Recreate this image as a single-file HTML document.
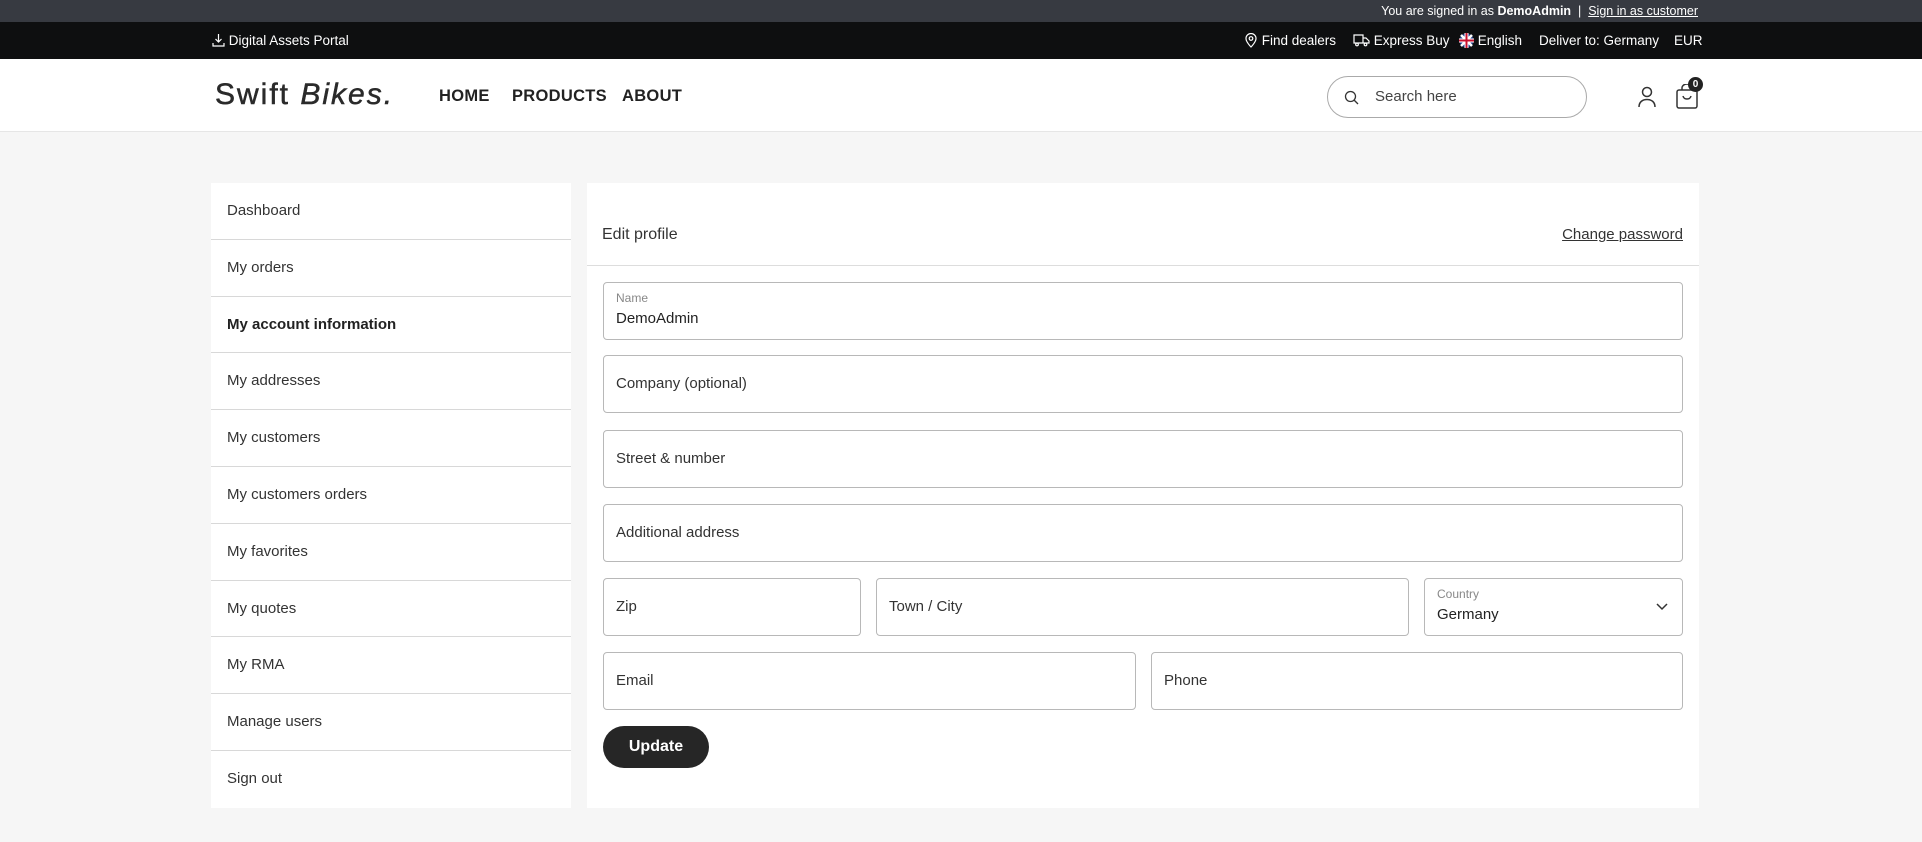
<!DOCTYPE html>
<html><head><meta charset="utf-8"><style>
*{box-sizing:border-box;margin:0;padding:0}
body{width:1922px;height:842px;background:#f6f6f6;font-family:"Liberation Sans",sans-serif;color:#222;position:relative;overflow:hidden}
.a{position:absolute}
.top{left:0;top:0;width:1922px;height:22px;background:#373a41;color:#fff;font-size:12.5px}
.blk{left:0;top:22px;width:1922px;height:37px;background:#0e0f10;color:#fff;font-size:13.5px}
.hdr{left:0;top:59px;width:1922px;height:73px;background:#fff;border-bottom:1px solid #e6e6e6}
.side{left:211px;top:183px;width:360px;height:625px;background:#fff}
.side div{height:56.8px;border-bottom:1px solid #d8d8d8;padding-left:16px;line-height:56px;font-size:15px;color:#333}
.side div:last-child{border-bottom:none}
.main{left:587px;top:183px;width:1112px;height:625px;background:#fff}
.in{position:absolute;border:1px solid #b8b8b8;border-radius:4px;height:58px;font-size:15px;color:#333;padding-left:12px;line-height:56px;background:#fff}
.lbl{position:absolute;left:12px;top:8px;font-size:12px;color:#888;line-height:14px}
.val{position:absolute;left:12px;top:27px;font-size:15px;color:#222;line-height:18px}
</style></head><body>
<div class="a top"><span class="a" style="right:224px;top:4px">You are signed in as <b>DemoAdmin</b>&nbsp; | &nbsp;<u>Sign in as customer</u></span></div>
<div class="a blk">
<span class="a" style="left:212px;top:11px"><svg width="13" height="14" viewBox="0 0 13 14" style="vertical-align:-2px" fill="none" stroke="#fff" stroke-width="1.2"><path d="M6.5 1v8M3.5 6l3 3 3-3M1 10v3h11v-3"/></svg> Digital Assets Portal</span>
<span class="a" style="left:1244px;top:11px"><svg width="14" height="15" viewBox="0 0 14 15" style="vertical-align:-3px" fill="none" stroke="#fff" stroke-width="1.2"><path d="M7 14s5-5 5-8.5A5 5 0 0 0 2 5.5C2 9 7 14 7 14z"/><circle cx="7" cy="5.5" r="1.8"/></svg> Find dealers</span>
<span class="a" style="left:1353px;top:11px"><svg width="17" height="14" viewBox="0 0 17 14" style="vertical-align:-2px" fill="none" stroke="#fff" stroke-width="1.2"><path d="M1 2h9v8H1zM10 5h3l3 3v2h-6"/><circle cx="4" cy="11.5" r="1.3"/><circle cx="12.5" cy="11.5" r="1.3"/></svg> Express Buy</span>
<span class="a" style="left:1459px;top:11px"><svg width="15" height="15" viewBox="0 0 15 15" style="vertical-align:-3px"><circle cx="7.5" cy="7.5" r="7" fill="#1f3f8f"/><path d="M2 2l11 11M13 2L2 13" stroke="#fff" stroke-width="2.5"/><path d="M7.5 0v15M0 7.5h15" stroke="#fff" stroke-width="4"/><path d="M7.5 0v15M0 7.5h15" stroke="#c8102e" stroke-width="2"/></svg> English</span>
<span class="a" style="left:1539px;top:11px">Deliver to: Germany</span>
<span class="a" style="left:1674px;top:11px">EUR</span>
</div>
<div class="a hdr">
<span class="a" style="left:215px;top:19px;font-size:30px;color:#2a2a2a;letter-spacing:2px;-webkit-text-stroke:0.5px #2a2a2a">Swift <i>Bikes.</i></span>
<span class="a" style="left:439px;top:28px;font-size:16.5px;font-weight:bold;color:#222;letter-spacing:0.3px">HOME</span>
<span class="a" style="left:512px;top:28px;font-size:16.5px;font-weight:bold;color:#222;letter-spacing:0.3px">PRODUCTS</span>
<span class="a" style="left:622px;top:28px;font-size:16.5px;font-weight:bold;color:#222;letter-spacing:0.3px">ABOUT</span>
<div class="a" style="left:1327px;top:17px;width:260px;height:42px;border:1px solid #aaa;border-radius:21px">
<svg class="a" style="left:16px;top:13px" width="15" height="15" viewBox="0 0 15 15" fill="none" stroke="#333" stroke-width="1.3"><circle cx="6.5" cy="6.5" r="5"/><path d="M10 10l4 4"/></svg>
<span class="a" style="left:47px;top:11px;font-size:15px;color:#444">Search here</span></div>
<svg class="a" style="left:1637px;top:27px" width="20" height="22" viewBox="0 0 20 22" fill="none" stroke="#333" stroke-width="1.5"><circle cx="10" cy="6" r="4.5"/><path d="M2 21c0-5 3.5-7.5 8-7.5s8 2.5 8 7.5"/></svg>
<svg class="a" style="left:1676px;top:25px" width="22" height="25" viewBox="0 0 22 25" fill="none" stroke="#333" stroke-width="1.5"><rect x="1" y="6" width="20" height="18" rx="2"/><path d="M6 6V4a5 4 0 0 1 10 0v2M7 12c1 4 7 4 8 0"/></svg>
<div class="a" style="left:1688px;top:18px;width:15px;height:15px;border-radius:50%;background:#222;color:#fff;font-size:10px;font-weight:bold;text-align:center;line-height:15px">0</div>
</div>
<div class="a side">
<div>Dashboard</div><div>My orders</div><div style="font-weight:bold;color:#222">My account information</div><div>My addresses</div><div>My customers</div><div>My customers orders</div><div>My favorites</div><div>My quotes</div><div>My RMA</div><div>Manage users</div><div>Sign out</div>
</div>
<div class="a main">
<span class="a" style="left:15px;top:43px;font-size:16px;color:#333">Edit profile</span>
<span class="a" style="right:16px;top:43px;font-size:15px;color:#333;text-decoration:underline">Change password</span>
<div class="a" style="left:0;top:82px;width:1112px;height:1px;background:#ddd"></div>
</div>
<div class="in" style="left:603px;top:282px;width:1080px"><span class="lbl">Name</span><span class="val">DemoAdmin</span></div>
<div class="in" style="left:603px;top:355px;width:1080px">Company (optional)</div>
<div class="in" style="left:603px;top:430px;width:1080px">Street &amp; number</div>
<div class="in" style="left:603px;top:504px;width:1080px">Additional address</div>
<div class="in" style="left:603px;top:578px;width:258px">Zip</div>
<div class="in" style="left:876px;top:578px;width:533px">Town / City</div>
<div class="in" style="left:1424px;top:578px;width:259px"><span class="lbl">Country</span><span class="val">Germany</span>
<svg class="a" style="right:14px;top:24px" width="12" height="8" viewBox="0 0 12 8" fill="none" stroke="#333" stroke-width="1.5"><path d="M1 1l5 5 5-5"/></svg></div>
<div class="in" style="left:603px;top:652px;width:533px">Email</div>
<div class="in" style="left:1151px;top:652px;width:532px">Phone</div>
<div class="a" style="left:603px;top:726px;width:106px;height:42px;border-radius:21px;background:#262626;color:#fff;font-weight:bold;font-size:16px;text-align:center;line-height:42px">Update</div>
</body></html>
